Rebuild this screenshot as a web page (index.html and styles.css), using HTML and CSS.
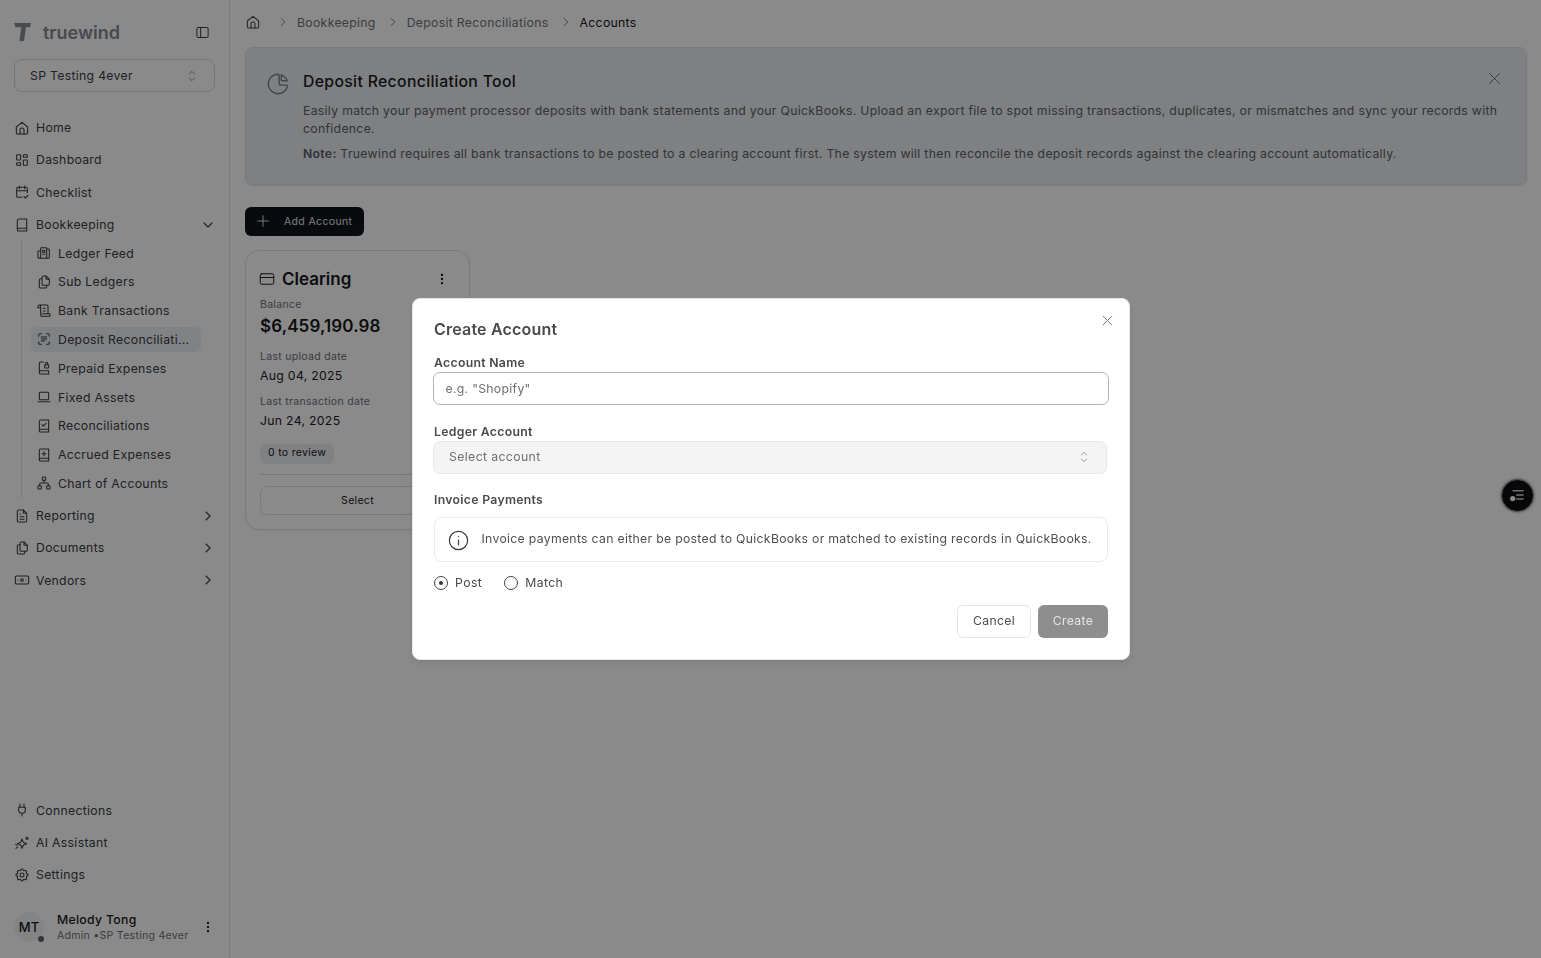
FILE: index.html
```html
<!DOCTYPE html>
<html lang="en">
<head>
<meta charset="utf-8">
<title>Accounts</title>
<link rel="stylesheet" href="styles.css">
</head>
<body>
<svg class="defs" width="0" height="0" aria-hidden="true">
  <symbol id="chev-r" viewBox="0 0 24 24"><path d="M9 6l6 6-6 6"/></symbol>
  <symbol id="chev-d" viewBox="0 0 24 24"><path d="M6 9l6 6 6-6"/></symbol>
  <symbol id="updown" viewBox="0 0 24 24"><path d="M8 9l4-4 4 4M8 15l4 4 4-4"/></symbol>
  <symbol id="dots" viewBox="0 0 24 24"><circle cx="12" cy="5" r="2"/><circle cx="12" cy="12" r="2"/><circle cx="12" cy="19" r="2"/></symbol>
  <symbol id="x" viewBox="0 0 24 24"><path d="M5 5l14 14M19 5L5 19"/></symbol>
  <symbol id="home" viewBox="0 0 24 24"><path d="M3.500 10.500L12 3.500l8.500 7V19a2 2 0 0 1-2 2h-13a2 2 0 0 1-2-2z"/><path d="M9 21v-6a3 3 0 0 1 6 0v6"/></symbol>
</svg>

<div class="app">
  <aside class="sidebar">
    <div class="brand">
      <svg class="logo" viewBox="0 0 20 20"><path d="M1 1h17l-1 4.200h-4L11 19H6.500l1.700-13.800H2.500z"/></svg>
      <span class="brand-name">truewind</span>
      <svg class="ico panel" viewBox="0 0 24 24"><rect x="3" y="4" width="18" height="16" rx="2"/><path d="M9 4v16"/></svg>
    </div>
    <div class="org-select">
      <span>SP Testing 4ever</span>
      <svg class="ico-ud"><use href="#updown"/></svg>
    </div>

    <nav class="nav nav-top">
      <a class="row"><svg class="ico"><use href="#home"/></svg>Home</a>
      <a class="row"><svg class="ico" viewBox="0 0 24 24"><rect x="4" y="4" width="6" height="8" rx="1"/><rect x="14" y="4" width="6" height="4" rx="1"/><rect x="4" y="16" width="6" height="4" rx="1"/><rect x="14" y="12" width="6" height="8" rx="1"/></svg>Dashboard</a>
      <a class="row"><svg class="ico" viewBox="0 0 24 24"><path d="M12 20H6a2 2 0 0 1-2-2V7a2 2 0 0 1 2-2h12a2 2 0 0 1 2 2v6M4 10h16M8 3v4M16 3v4M15 19l2 2 4-4"/></svg>Checklist</a>
      <a class="row"><svg class="ico" viewBox="0 0 24 24"><path d="M5 18V6a3 3 0 0 1 3-3h11v14H7.500A2.500 2.500 0 0 0 5 19.500 1.500 1.500 0 0 0 7 21h12v-4"/></svg>Bookkeeping<svg class="ico caret"><use href="#chev-d"/></svg></a>
      <div class="subnav">
        <a class="sub"><svg class="ico" viewBox="0 0 24 24"><path d="M16 6h3a1 1 0 0 1 1 1v11a2 2 0 0 1-4 0V5a1 1 0 0 0-1-1H8a1 1 0 0 0-1 1v13a2 2 0 0 1-2 2 2 2 0 0 1-2-2V9h4M18 20H5"/><path d="M10 8h3v3h-3zM10 14h3"/></svg>Ledger Feed</a>
        <a class="sub"><svg class="ico" viewBox="0 0 24 24"><path d="M15 3v4a1 1 0 0 0 1 1h4"/><path d="M18 17h-7a2 2 0 0 1-2-2V5a2 2 0 0 1 2-2h4l5 5v7a2 2 0 0 1-2 2z"/><path d="M16 17v2a2 2 0 0 1-2 2H7a2 2 0 0 1-2-2V9a2 2 0 0 1 2-2h2"/></svg>Sub Ledgers</a>
        <a class="sub"><svg class="ico" viewBox="0 0 24 24"><path d="M21 20H9a2 2 0 0 1-2-2V5a2 2 0 0 0-4 0v2h4M5 3h11a2 2 0 0 1 2 2v11H9.500M11 8h3M11 12h3M18 16h3v2a2 2 0 0 1-2 2"/></svg>Bank Transactions</a>
        <a class="sub active"><svg class="ico" viewBox="0 0 24 24"><path d="M4 8V6a2 2 0 0 1 2-2h2M4 16v2a2 2 0 0 0 2 2h2M16 4h2a2 2 0 0 1 2 2v2M16 20h2a2 2 0 0 0 2-2v-2M8 9h8M8 12h8M8 15h5"/></svg><span class="clip">Deposit Reconciliati...</span></a>
        <a class="sub"><svg class="ico" viewBox="0 0 24 24"><path d="M11 3H7a2 2 0 0 0-2 2v13a2 2 0 0 1 2-2h12v5H7a2 2 0 0 1-2-2"/><rect x="13" y="7" width="6" height="5" rx="1"/><path d="M14.500 7V5a1.500 1.500 0 0 1 3 0v2"/></svg>Prepaid Expenses</a>
        <a class="sub"><svg class="ico" viewBox="0 0 24 24"><rect x="5" y="5" width="14" height="11" rx="1.500"/><path d="M3 19h18"/></svg>Fixed Assets</a>
        <a class="sub"><svg class="ico" viewBox="0 0 24 24"><path d="M5 19V5a2 2 0 0 1 2-2h12v14H7a2 2 0 0 0-2 2 2 2 0 0 0 2 2h12v-4"/><path d="M9 10l2 2 4-4"/></svg>Reconciliations</a>
        <a class="sub"><svg class="ico" viewBox="0 0 24 24"><path d="M5 19V5a2 2 0 0 1 2-2h12v14H7a2 2 0 0 0-2 2 2 2 0 0 0 2 2h12v-4"/><path d="M12 7v6M9 10h6"/></svg>Accrued Expenses</a>
        <a class="sub"><svg class="ico" viewBox="0 0 24 24"><rect x="9.500" y="3" width="5" height="5" rx="1"/><rect x="3" y="16" width="5" height="5" rx="1"/><rect x="16" y="16" width="5" height="5" rx="1"/><path d="M5.500 16v-2a2 2 0 0 1 2-2h9a2 2 0 0 1 2 2v2M12 8v4"/></svg>Chart of Accounts</a>
      </div>
      <a class="row"><svg class="ico" viewBox="0 0 24 24"><path d="M14 3v4a1 1 0 0 0 1 1h4"/><path d="M17 21H7a2 2 0 0 1-2-2V5a2 2 0 0 1 2-2h7l5 5v11a2 2 0 0 1-2 2zM9 9h1M9 13h6M9 17h6"/></svg>Reporting<svg class="ico caret"><use href="#chev-r"/></svg></a>
      <a class="row"><svg class="ico" viewBox="0 0 24 24"><path d="M15 3v4a1 1 0 0 0 1 1h4"/><path d="M18 17h-7a2 2 0 0 1-2-2V5a2 2 0 0 1 2-2h4l5 5v7a2 2 0 0 1-2 2z"/><path d="M16 17v2a2 2 0 0 1-2 2H7a2 2 0 0 1-2-2V9a2 2 0 0 1 2-2h2"/></svg>Documents<svg class="ico caret"><use href="#chev-r"/></svg></a>
      <a class="row"><svg class="ico" viewBox="0 0 24 24"><rect x="2" y="6" width="20" height="12" rx="2"/><circle cx="12" cy="12" r="2"/><path d="M6 12h.01M18 12h.01"/></svg>Vendors<svg class="ico caret"><use href="#chev-r"/></svg></a>
    </nav>

    <nav class="nav nav-bottom">
      <a class="row"><svg class="ico" viewBox="0 0 24 24"><path d="M9 3v5M15 3v5M7 8h10v4a5 5 0 0 1-10 0zM12 17v4"/></svg>Connections</a>
      <a class="row"><svg class="ico" viewBox="0 0 24 24"><path d="M12 6l2 5 5 2-5 2-2 5-2-5-5-2 5-2zM2.500 14l2 1.500M3 20l2.500-2"/><circle cx="19.500" cy="5" r="1.600"/></svg>AI Assistant</a>
      <a class="row"><svg class="ico" viewBox="0 0 24 24"><path d="M10.300 4.300c.4-1.800 3-1.800 3.400 0a1.700 1.700 0 0 0 2.600 1.100c1.500-.9 3.300.8 2.400 2.400a1.700 1.700 0 0 0 1 2.500c1.800.4 1.800 3 0 3.400a1.700 1.700 0 0 0-1 2.600c.9 1.500-.9 3.300-2.400 2.400a1.700 1.700 0 0 0-2.600 1c-.4 1.800-3 1.800-3.400 0a1.700 1.700 0 0 0-2.600-1c-1.500.9-3.300-.9-2.400-2.400a1.700 1.700 0 0 0-1-2.600c-1.800-.4-1.800-3 0-3.400a1.700 1.700 0 0 0 1-2.500c-.9-1.600.9-3.300 2.400-2.400a1.700 1.700 0 0 0 2.600-1.100z"/><circle cx="12" cy="12" r="3"/></svg>Settings</a>
    </nav>

    <div class="user">
      <div class="avatar">MT<span class="status"></span></div>
      <div class="user-text">
        <div class="user-name">Melody Tong</div>
        <div class="user-meta">Admin •SP Testing 4ever</div>
      </div>
      <svg class="ico-dots"><use href="#dots"/></svg>
    </div>
  </aside>

  <main class="main">
    <div class="crumbs">
      <svg class="ico crumb-home"><use href="#home"/></svg>
      <svg class="sep"><use href="#chev-r"/></svg>
      <span>Bookkeeping</span>
      <svg class="sep"><use href="#chev-r"/></svg>
      <span>Deposit Reconciliations</span>
      <svg class="sep"><use href="#chev-r"/></svg>
      <span class="current">Accounts</span>
    </div>

    <section class="banner">
      <svg class="banner-ico" viewBox="0 0 24 24"><path d="M10 3.200a9 9 0 1 0 10.800 10.800 1 1 0 0 0-1-1H15a2 2 0 0 1-2-2V4a.9.9 0 0 0-1-1z"/><path d="M15 3.500A9 9 0 0 1 20.500 9H16a1 1 0 0 1-1-1z"/></svg>
      <div class="banner-body">
        <h2>Deposit Reconciliation Tool</h2>
        <p class="lead">Easily match your payment processor deposits with bank statements and your QuickBooks. Upload an export file to spot missing transactions, duplicates, or mismatches and sync your records with confidence.</p>
        <p class="note"><b>Note:</b> Truewind requires all bank transactions to be posted to a clearing account first. The system will then reconcile the deposit records against the clearing account automatically.</p>
      </div>
      <svg class="banner-x"><use href="#x"/></svg>
    </section>

    <button class="add-btn"><svg class="plus" viewBox="0 0 24 24"><path d="M12 5v14M5 12h14"/></svg>Add Account</button>

    <article class="card">
      <div class="card-head">
        <svg class="ico card-ico" viewBox="0 0 24 24"><rect x="3" y="5" width="18" height="14" rx="2"/><path d="M3 10h18"/></svg>
        <h3>Clearing</h3>
        <svg class="ico-dots"><use href="#dots"/></svg>
      </div>
      <div class="cap">Balance</div>
      <div class="balance">$6,459,190.98</div>
      <div class="cap cap-gap">Last upload date</div>
      <div class="val">Aug 04, 2025</div>
      <div class="cap cap-gap2">Last transaction date</div>
      <div class="val">Jun 24, 2025</div>
      <span class="pill">0 to review</span>
      <div class="rule"></div>
      <button class="select-btn">Select</button>
    </article>
  </main>
</div>

<div class="fab">
  <svg viewBox="0 0 24 24"><path d="M7 6.500h11.500M11 11.500h7.500M11 16h7.500"/><circle class="fab-dot" cx="6.500" cy="15.500" r="3"/></svg>
</div>

<div class="overlay">
  <div class="modal" role="dialog">
    <svg class="modal-x"><use href="#x"/></svg>
    <h2 class="modal-title">Create Account</h2>
    <label class="lbl lbl-name">Account Name</label>
    <div class="input">e.g. "Shopify"</div>
    <label class="lbl lbl-ledger">Ledger Account</label>
    <div class="select"><span>Select account</span><svg class="ico-ud"><use href="#updown"/></svg></div>
    <label class="lbl lbl-inv">Invoice Payments</label>
    <div class="info">
      <svg class="info-ico" viewBox="0 0 24 24"><circle cx="12" cy="12" r="9.500"/><path d="M12 11.500v5M12 7.800v.01"/></svg>
      <span>Invoice payments can either be posted to QuickBooks or matched to existing records in QuickBooks.</span>
    </div>
    <div class="radios">
      <span class="radio-item"><span class="radio on"></span>Post</span>
      <span class="radio-item"><span class="radio"></span>Match</span>
    </div>
    <div class="actions">
      <button class="btn-cancel">Cancel</button>
      <button class="btn-create">Create</button>
    </div>
  </div>
</div>
</body>
</html>
```
FILE: styles.css
```css
* { box-sizing: border-box; }
html, body { margin: 0; height: 100%; overflow: hidden; }
body { font-family: Inter, "Liberation Sans", sans-serif; background: #fff; color: #18181b; font-size: 12.250px; letter-spacing: .3px; }
.defs { position: absolute; }
svg { fill: none; stroke: currentColor; stroke-width: 1.6; stroke-linecap: round; stroke-linejoin: round; flex: none; }
h2, h3, p { margin: 0; }

.app { display: flex; height: 958px; }
.sidebar { width: 230px; flex: none; border-right: 1px solid #dfe1e5; display: flex; flex-direction: column; background: #fff; color: #3a3d44; }
.brand { height: 59px; display: flex; align-items: center; padding: 5px 0 0 13px; }
.logo { width: 20px; height: 20px; fill: #888c92; stroke: none; }
.brand-name { font-size: 18px; font-weight: 600; letter-spacing: 0; color: #84888f; margin-left: 10px; }
.ico { width: 16px; height: 16px; display: block; }
.ico-ud { width: 16px; height: 16px; stroke-width: 1.100; }
.panel { margin-left: auto; margin-right: 19px; width: 15px; height: 15px; }
.org-select { margin: 0 14px; height: 33px; border: 1px solid #d9dbe0; border-radius: 8px; display: flex; align-items: center; justify-content: space-between; padding: 0 14px 0 15px; }
.org-select .ico-ud { color: #6b6f76; }
.nav { display: flex; flex-direction: column; padding: 0 14px; }
.nav-top { margin-top: 19.500px; }
.nav-bottom { margin-top: auto; }
.row { height: 32.3px; display: flex; align-items: center; gap: 6px; }
.caret { margin-left: auto; margin-right: -1px; }
.subnav { margin-left: 7px; padding-left: 14px; border-left: 1px solid #dfe1e5; margin-top: -2px; margin-bottom: 1.600px; }
.sub { height: 28.8px; display: flex; align-items: center; gap: 6px; margin-right: 14px; position: relative; z-index: 0; }
.sub.active::before { content: ""; position: absolute; z-index: -1; left: -5px; right: 0; top: 2px; bottom: 2px; background: #eff1f4; border-radius: 6px; }
.clip { white-space: nowrap; }
.user { margin-top: 4px; height: 63px; display: flex; align-items: center; padding: 1px 14px 0; }
.avatar { width: 30px; height: 30px; border-radius: 50%; background: #f3f4f6; color: #18181b; font-size: 13px; letter-spacing: 0; font-weight: 500; display: flex; align-items: center; justify-content: center; position: relative; flex: none; }
.status { position: absolute; right: 0; bottom: 0; width: 6px; height: 6px; border-radius: 50%; background: #5b6068; }
.user-text { margin-left: 13px; flex: 1; }
.user-name { font-weight: 500; color: #18181b; }
.user-meta { font-size: 10.500px; color: #6c7078; margin-top: 2px; }
.ico-dots { width: 14px; height: 16px; fill: #18181b; stroke: none; }

.main { flex: 1; min-width: 0; padding: 0 14px 0 15px; }
.crumbs { height: 47px; display: flex; align-items: center; padding-bottom: 3px; color: #6f737b; }
.crumb-home { margin-right: 15px; color: #45484f; }
.sep { width: 14px; height: 14px; margin-right: 7px; }
.crumbs span { margin-right: 10px; }
.crumbs .current { color: #18181b; }
.banner { position: relative; height: 138px; background: #e9ecf0; border: 1px solid #dfe2e7; border-radius: 8px; box-shadow: 0 1px 2px rgba(0,0,0,.1); padding: 23px 22px 0 21px; display: flex; }
.banner-ico { width: 26px; height: 26px; margin-left: -2px; color: #7c8088; stroke-width: 1.300; }
.banner-body { margin-left: 12px; flex: 1; }
.banner h2 { font-size: 15.750px; font-weight: 500; line-height: 22px; letter-spacing: .35px; color: #1b1c20; }
.lead { line-height: 18px; color: #5c6068; margin-top: 9px; }
.note { line-height: 18px; color: #5c6068; margin-top: 7px; }
.note b { font-weight: 600; }
.banner-x { position: absolute; right: 23px; top: 22px; width: 17px; height: 17px; color: #6a6e75; stroke-width: 1.400; }
.add-btn { display: flex; align-items: center; margin-top: 22px; height: 29px; width: 119px; background: #111318; border: 0; border-radius: 6px; color: #dfe1e5; font: 400 10.500px Inter, sans-serif; letter-spacing: .35px; padding: 0 0 1px 9px; }
.plus { width: 18px; height: 18px; margin-right: 12px; stroke-width: 1.300; }
.card { width: 225px; height: 280px; margin-top: 14px; border: 1px solid #dfe1e5; border-radius: 14px; padding: 15px 14px 0; box-shadow: 0 1px 2px rgba(0,0,0,.04); }
.card-head { display: flex; align-items: center; height: 26px; }
.card-ico { width: 18px; height: 18px; margin-left: -2px; stroke-width: 1.300; }
.card h3 { font-size: 17px; font-weight: 600; letter-spacing: 0; margin-left: 6px; flex: 1; }
.card .ico-dots { margin-right: 6px; }
.cap { font-size: 10.500px; color: #6c7078; margin-top: 6px; line-height: 14px; }
.balance { font-size: 17px; font-weight: 600; line-height: 24px; letter-spacing: .12px; margin-top: 2px; }
.cap-gap { margin-top: 12px; }
.cap-gap2 { margin-top: 10px; }
.val { line-height: 18px; margin-top: 3px; color: #1f2126; }
.pill { display: inline-block; margin-top: 14px; height: 20px; padding: 0 8px; background: #eceef2; border-radius: 6px; font-size: 10.500px; line-height: 18px; }
.rule { height: 1px; background: #dfe1e5; margin-top: 10px; }
.select-btn { display: block; width: 100%; height: 29px; margin-top: 11px; background: #fff; border: 1px solid #dfe1e5; border-radius: 7px; font: 400 10.500px Inter, sans-serif; letter-spacing: .3px; color: #18181b; }

.fab { position: fixed; left: 1501px; top: 479px; width: 33px; height: 33px; border-radius: 50%; background: #0f1013; border: 1px solid #9a9a9a; display: flex; align-items: center; justify-content: center; color: #ccc; z-index: 1; box-shadow: 0 0 3px rgba(0,0,0,.5); }
.fab svg { width: 21px; height: 21px; stroke-width: 1.600; }
.fab-dot { fill: #fff; stroke: none; }

.overlay { position: fixed; inset: 0; z-index: 2; background: rgba(0,0,0,.46); display: flex; align-items: center; justify-content: center; }
.modal { position: relative; width: 718px; height: 362px; background: #fff; border-radius: 8px; border: 1px solid #e6e6e6; padding: 0 20.500px 0 21.500px; color: #4a4a4a; box-shadow: 0 4px 10px rgba(0,0,0,.08); }
.modal-x { position: absolute; right: 14px; top: 13.500px; width: 15px; height: 15px; color: #7c7c7c; stroke-width: 1.600; }
.modal-title { font-size: 16px; font-weight: 600; letter-spacing: .2px; line-height: 22px; margin-top: 19px; color: #4a4a4a; }
.lbl { display: block; font-weight: 600; line-height: 16px; }
.lbl-name { margin-top: 15px; }
.input { height: 33px; width: 676px; margin-left: -1px; margin-top: 1px; border: 1px solid #b5b5b5; border-radius: 7px; padding: 0 11.500px; line-height: 31px; color: #6f6f6f; }
.lbl-ledger { margin-top: 19px; }
.select { height: 33px; width: 674px; margin-left: -1px; margin-top: 1px; border: 1px solid #e8e8e8; border-radius: 7px; background: #f4f4f4; padding: 0 14px 2px 15px; display: flex; align-items: center; justify-content: space-between; letter-spacing: .38px; color: #6f6f6f; }
.select .ico-ud { color: #7c7c7c; }
.lbl-inv { margin-top: 18px; }
.info { height: 45px; width: 674px; margin-top: 9px; border: 1px solid #ebebeb; border-radius: 8px; display: flex; align-items: center; padding: 0 0 2px 15px; color: #4f4f4f; white-space: nowrap; }
.info-ico { width: 23px; height: 23px; margin: 3px 11.500px 0 -3px; color: #3f3f3f; stroke-width: 1.300; }
.radios { display: flex; gap: 22px; margin-top: 11px; height: 18px; align-items: center; letter-spacing: .4px; }
.radio-item { display: flex; align-items: center; gap: 7px; }
.radio { width: 14px; height: 14px; border-radius: 50%; border: 1px solid #444; display: block; position: relative; margin-top: 1px; }
.radio.on::after { content: ""; position: absolute; left: 4px; top: 4px; width: 4px; height: 4px; background: #333; border-radius: 50%; }
.actions { display: flex; justify-content: flex-end; gap: 7px; margin-top: 14px; }
.btn-cancel, .btn-create { height: 33px; border-radius: 6px; font: 400 12.250px Inter, sans-serif; letter-spacing: .3px; padding: 0 0 2px; }
.btn-cancel { width: 74px; background: #fff; border: 1px solid #e4e4e4; color: #4a4a4a; }
.btn-create { width: 70px; background: #8e8e8e; border: 0; color: #e4e4e4; }
```
